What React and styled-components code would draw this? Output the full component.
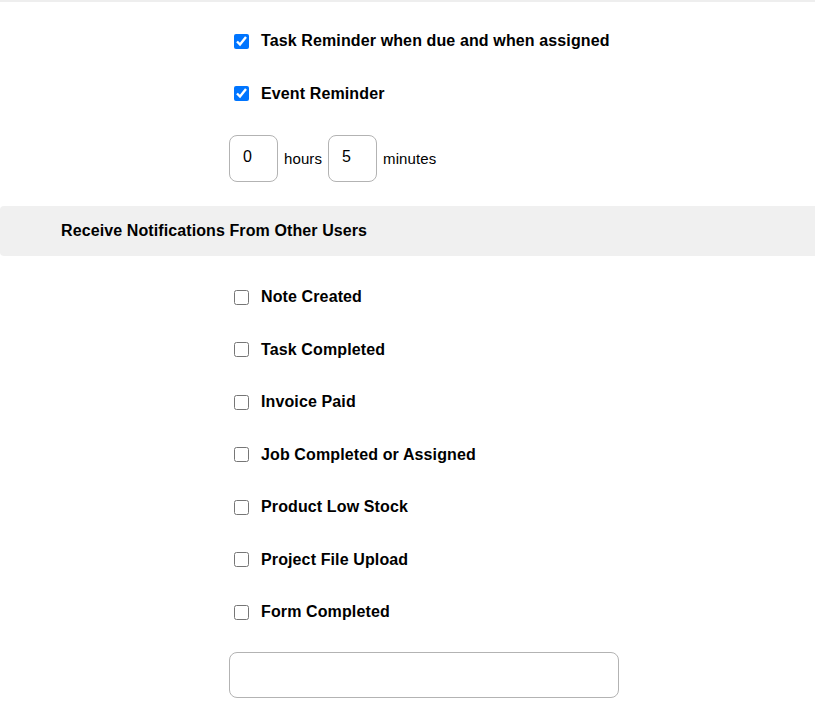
import React from "react";
import styled, { createGlobalStyle } from "styled-components";

const GlobalStyle = createGlobalStyle`
  body {
    margin: 0;
    background: #ffffff;
    font-family: "Liberation Sans", Arial, sans-serif;
    color: #000000;
  }
`;

const Page = styled.div`
  width: 100%;
  min-height: 713px;
  border-top: 2px solid #eeeeee;
  box-sizing: border-box;
  overflow: hidden;
`;

const Group = styled.div`
  display: flex;
  flex-direction: column;
  padding-left: 230px;
  padding-top: ${(p) => p.$top || 0}px;
`;

const Row = styled.label`
  display: flex;
  align-items: center;
  height: 52.5px;
  font-size: 16px;
  font-weight: 700;
  letter-spacing: 0.12px;
  cursor: pointer;
`;

const Check = styled.input.attrs({ type: "checkbox" })`
  width: 15px;
  height: 15px;
  margin: 0 12px 0 4px;
  accent-color: #0075ff;
`;

const TimeRow = styled.div`
  display: flex;
  align-items: center;
  gap: 6px;
  margin-top: 15px;
  margin-left: -1px;
  font-size: 15px;
  letter-spacing: 0.1px;
`;

const NumberBox = styled.input`
  width: 49px;
  height: 47px;
  box-sizing: border-box;
  border: 1px solid #b3b3b3;
  border-radius: 8px;
  padding: 0 0 3px 13px;
  font-family: inherit;
  font-size: 16px;
  color: #000;
  outline: none;
`;

const Band = styled.div`
  display: flex;
  align-items: center;
  height: 50px;
  margin-top: 24px;
  padding-left: 61px;
  background: #f0f0f0;
  border-radius: 4px 0 0 4px;
  font-size: 16px;
  font-weight: 700;
  letter-spacing: 0.1px;
`;

const TextBox = styled.input`
  width: 390px;
  height: 46px;
  box-sizing: border-box;
  margin: 13px 0 0 -1px;
  border: 1px solid #b3b3b3;
  border-radius: 8px;
  padding: 0 12px;
  font-family: inherit;
  font-size: 16px;
  outline: none;
`;

const reminders = [
  { label: "Task Reminder when due and when assigned", on: true },
  { label: "Event Reminder", on: true },
];

const fromUsers = [
  "Note Created",
  "Task Completed",
  "Invoice Paid",
  "Job Completed or Assigned",
  "Product Low Stock",
  "Project File Upload",
  "Form Completed",
];

export default function App() {
  return (
    <Page>
      <GlobalStyle />
      <Group $top={13}>
        {reminders.map((r) => (
          <Row key={r.label}>
            <Check defaultChecked={r.on} />
            {r.label}
          </Row>
        ))}
        <TimeRow>
          <NumberBox defaultValue="0" />
          <span>hours</span>
          <NumberBox defaultValue="5" />
          <span>minutes</span>
        </TimeRow>
      </Group>
      <Band>Receive Notifications From Other Users</Band>
      <Group $top={15}>
        {fromUsers.map((name) => (
          <Row key={name}>
            <Check />
            {name}
          </Row>
        ))}
        <TextBox />
      </Group>
    </Page>
  );
}
